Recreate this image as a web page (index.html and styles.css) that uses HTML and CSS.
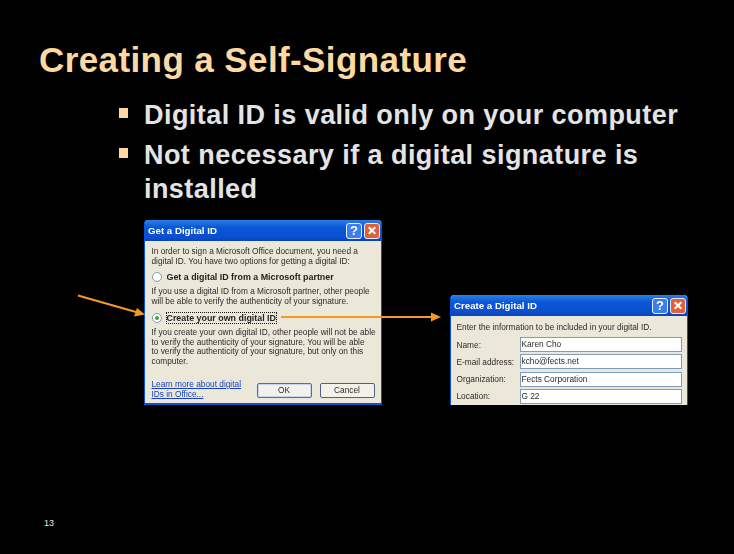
FILE: index.html
```html
<!DOCTYPE html>
<html lang="en">
<head>
<meta charset="utf-8">
<title>Creating a Self-Signature</title>
<link rel="stylesheet" href="styles.css">
</head>
<body>
<main class="slide">
  <h1 class="title">Creating a Self-Signature</h1>
  <ul class="bullets">
    <li>Digital ID is valid only on your computer</li>
    <li>Not necessary if a digital signature is installed</li>
  </ul>

  <section class="win win-get">
    <header class="titlebar">
      <span class="cap">Get a Digital ID</span>
      <span class="tbtn help">?</span>
      <span class="tbtn close"><svg viewBox="0 0 15 15" width="15" height="15"><path d="M4 4l7 7M11 4l-7 7" stroke="#fff" stroke-width="2.2" fill="none"/></svg></span>
    </header>
    <div class="body body-get">
      <p class="para">In order to sign a Microsoft Office document, you need a<br>digital ID. You have two options for getting a digital ID:</p>
      <div class="opt"><span class="radio"></span><b class="optlabel">Get a digital ID from a Microsoft partner</b></div>
      <p class="para">If you use a digital ID from a Microsoft partner, other people<br>will be able to verify the authenticity of your signature.</p>
      <div class="opt"><span class="radio on"></span><b class="optlabel focus">Create your own digital ID</b></div>
      <p class="para">If you create your own digital ID, other people will not be able<br>to verify the authenticity of your signature. You will be able<br>to verify the authenticity of your signature, but only on this<br>computer.</p>
      <div class="foot">
        <a class="learn">Learn more about digital<br>IDs in Office...</a>
        <span class="btn btn-ok">OK</span>
        <span class="btn">Cancel</span>
      </div>
    </div>
  </section>

  <section class="win win-create">
    <header class="titlebar">
      <span class="cap">Create a Digital ID</span>
      <span class="tbtn help">?</span>
      <span class="tbtn close"><svg viewBox="0 0 15 15" width="15" height="15"><path d="M4 4l7 7M11 4l-7 7" stroke="#fff" stroke-width="2.2" fill="none"/></svg></span>
    </header>
    <div class="body body-create">
      <p class="intro">Enter the information to be included in your digital ID.</p>
      <div class="fields">
        <span class="lbl">Name:</span><span class="input">Karen Cho</span>
        <span class="lbl">E-mail address:</span><span class="input">kcho@fects.net</span>
        <span class="lbl">Organization:</span><span class="input">Fects Corporation</span>
        <span class="lbl">Location:</span><span class="input">G 22</span>
      </div>
    </div>
  </section>

  <svg class="arrows" viewBox="0 0 734 554" width="734" height="554">
    <path d="M78 295.500L136 312" stroke="#f39a24" stroke-width="2" fill="none"/>
    <path d="M145 314.500L134 316.500L137 308z" fill="#f39a24"/>
    <path d="M281 317H432" stroke="#f39a24" stroke-width="2" fill="none"/>
    <path d="M441 317L431 312.500V321.500z" fill="#f39a24"/>
  </svg>

  <footer class="pageno">13</footer>
</main>
</body>
</html>
```
FILE: styles.css
```css
* { box-sizing: border-box; }
html, body { margin: 0; padding: 0; background: #000; }
.slide {
  position: relative;
  width: 734px;
  height: 554px;
  overflow: hidden;
  background: #000;
  font-family: "Liberation Sans", Arial, sans-serif;
  padding: 41px 0 0 39px;
}
.title {
  margin: 0;
  font-size: 35px;
  letter-spacing: 0.400px;
  line-height: 38px;
  font-weight: 700;
  color: #fbd9a0;
}
.bullets {
  list-style: none;
  margin: 19px 0 0;
  padding: 0 40px 0 105px;
  color: #e4e4e4;
  font-size: 27px;
  letter-spacing: 0.440px;
  font-weight: 700;
}
.bullets li { position: relative; margin-bottom: 6px; line-height: 34px; }
.bullets li::before {
  content: "";
  position: absolute;
  left: -25px;
  top: 10px;
  width: 9px;
  height: 10px;
  background: #fbd9a0;
}

.win {
  position: absolute;
  width: 238px;
  background: #ebe8d9;
  border: solid #0a50d8;
  border-width: 0 1.500px 2px;
  border-radius: 4px 4px 0 0;
  font-size: 8.300px;
  color: #2a2a2a;
  overflow: hidden;
  filter: blur(0.45px);
}
.win-get { left: 144px; top: 220px; height: 185px; }
.win-create { left: 450px; top: 295px; height: 110px; border-bottom: 0; }
.titlebar {
  display: flex;
  align-items: center;
  height: 21px;
  margin: 0 -2px;
  padding: 0 3px 0 5px;
  gap: 2px;
  background: linear-gradient(#2a7fe8, #0b57d6 35%, #0a4fd0 80%, #0a45b8);
  color: #fff;
}
.cap { flex: 1; font-weight: 700; font-size: 9.700px; }
.tbtn {
  width: 16px;
  height: 16px;
  border: 1px solid #e8eefc;
  border-radius: 3px;
  display: flex;
  align-items: center;
  justify-content: center;
  font-weight: 700;
  font-size: 13px;
  line-height: 1;
}
.help { background: #3b7df0; }
.close { background: #e0603a; }

.body-get { padding: 6px 0 0 6.500px; }
.para { margin: 0; line-height: 9.700px; white-space: nowrap; }
.opt { display: flex; align-items: center; gap: 5px; height: 14px; margin: 4px 0 3px; }
.radio {
  flex: none;
  width: 10px;
  height: 10px;
  border-radius: 50%;
  border: 1px solid #7f9db9;
  background: #fff;
  position: relative;
}
.radio.on::after {
  content: "";
  position: absolute;
  left: 2px;
  top: 2px;
  width: 4px;
  height: 4px;
  border-radius: 50%;
  background: #3fa63f;
}
.optlabel { font-weight: 700; font-size: 8.900px; color: #222; white-space: nowrap; }
.focus { outline: 1px dotted #111; }
.foot { display: flex; align-items: flex-start; margin-top: 12px; }
.learn { width: 105px; flex: none; line-height: 10px; color: #1840c8; text-decoration: underline; white-space: nowrap; }
.btn {
  flex: none;
  width: 55px;
  height: 15px;
  margin-top: 4px;
  margin-left: 8px;
  border: 1px solid #4a6488;
  border-radius: 2px;
  background: #f3f2ea;
  display: flex;
  align-items: center;
  justify-content: center;
}
.btn-ok { border-color: #4f70a8; box-shadow: inset 0 0 0 1px #c3d4f0; margin-left: 0; }

.body-create { padding: 5px 0 0 5.500px; }
.intro { margin: 0 0 4px; line-height: 12px; white-space: nowrap; }
.fields {
  display: grid;
  grid-template-columns: 63px 162px;
  grid-auto-rows: 15px;
  row-gap: 2.300px;
  align-items: center;
}
.lbl { white-space: nowrap; }
.input {
  height: 15px;
  background: #fff;
  border: 1px solid #7f9db9;
  padding-left: 1px;
  line-height: 13px;
}

.arrows { position: absolute; left: 0; top: 0; pointer-events: none; }
.pageno {
  position: absolute;
  left: 44px;
  top: 518px;
  font-size: 9px;
  line-height: 10px;
  color: #e6e6e6;
}
```
